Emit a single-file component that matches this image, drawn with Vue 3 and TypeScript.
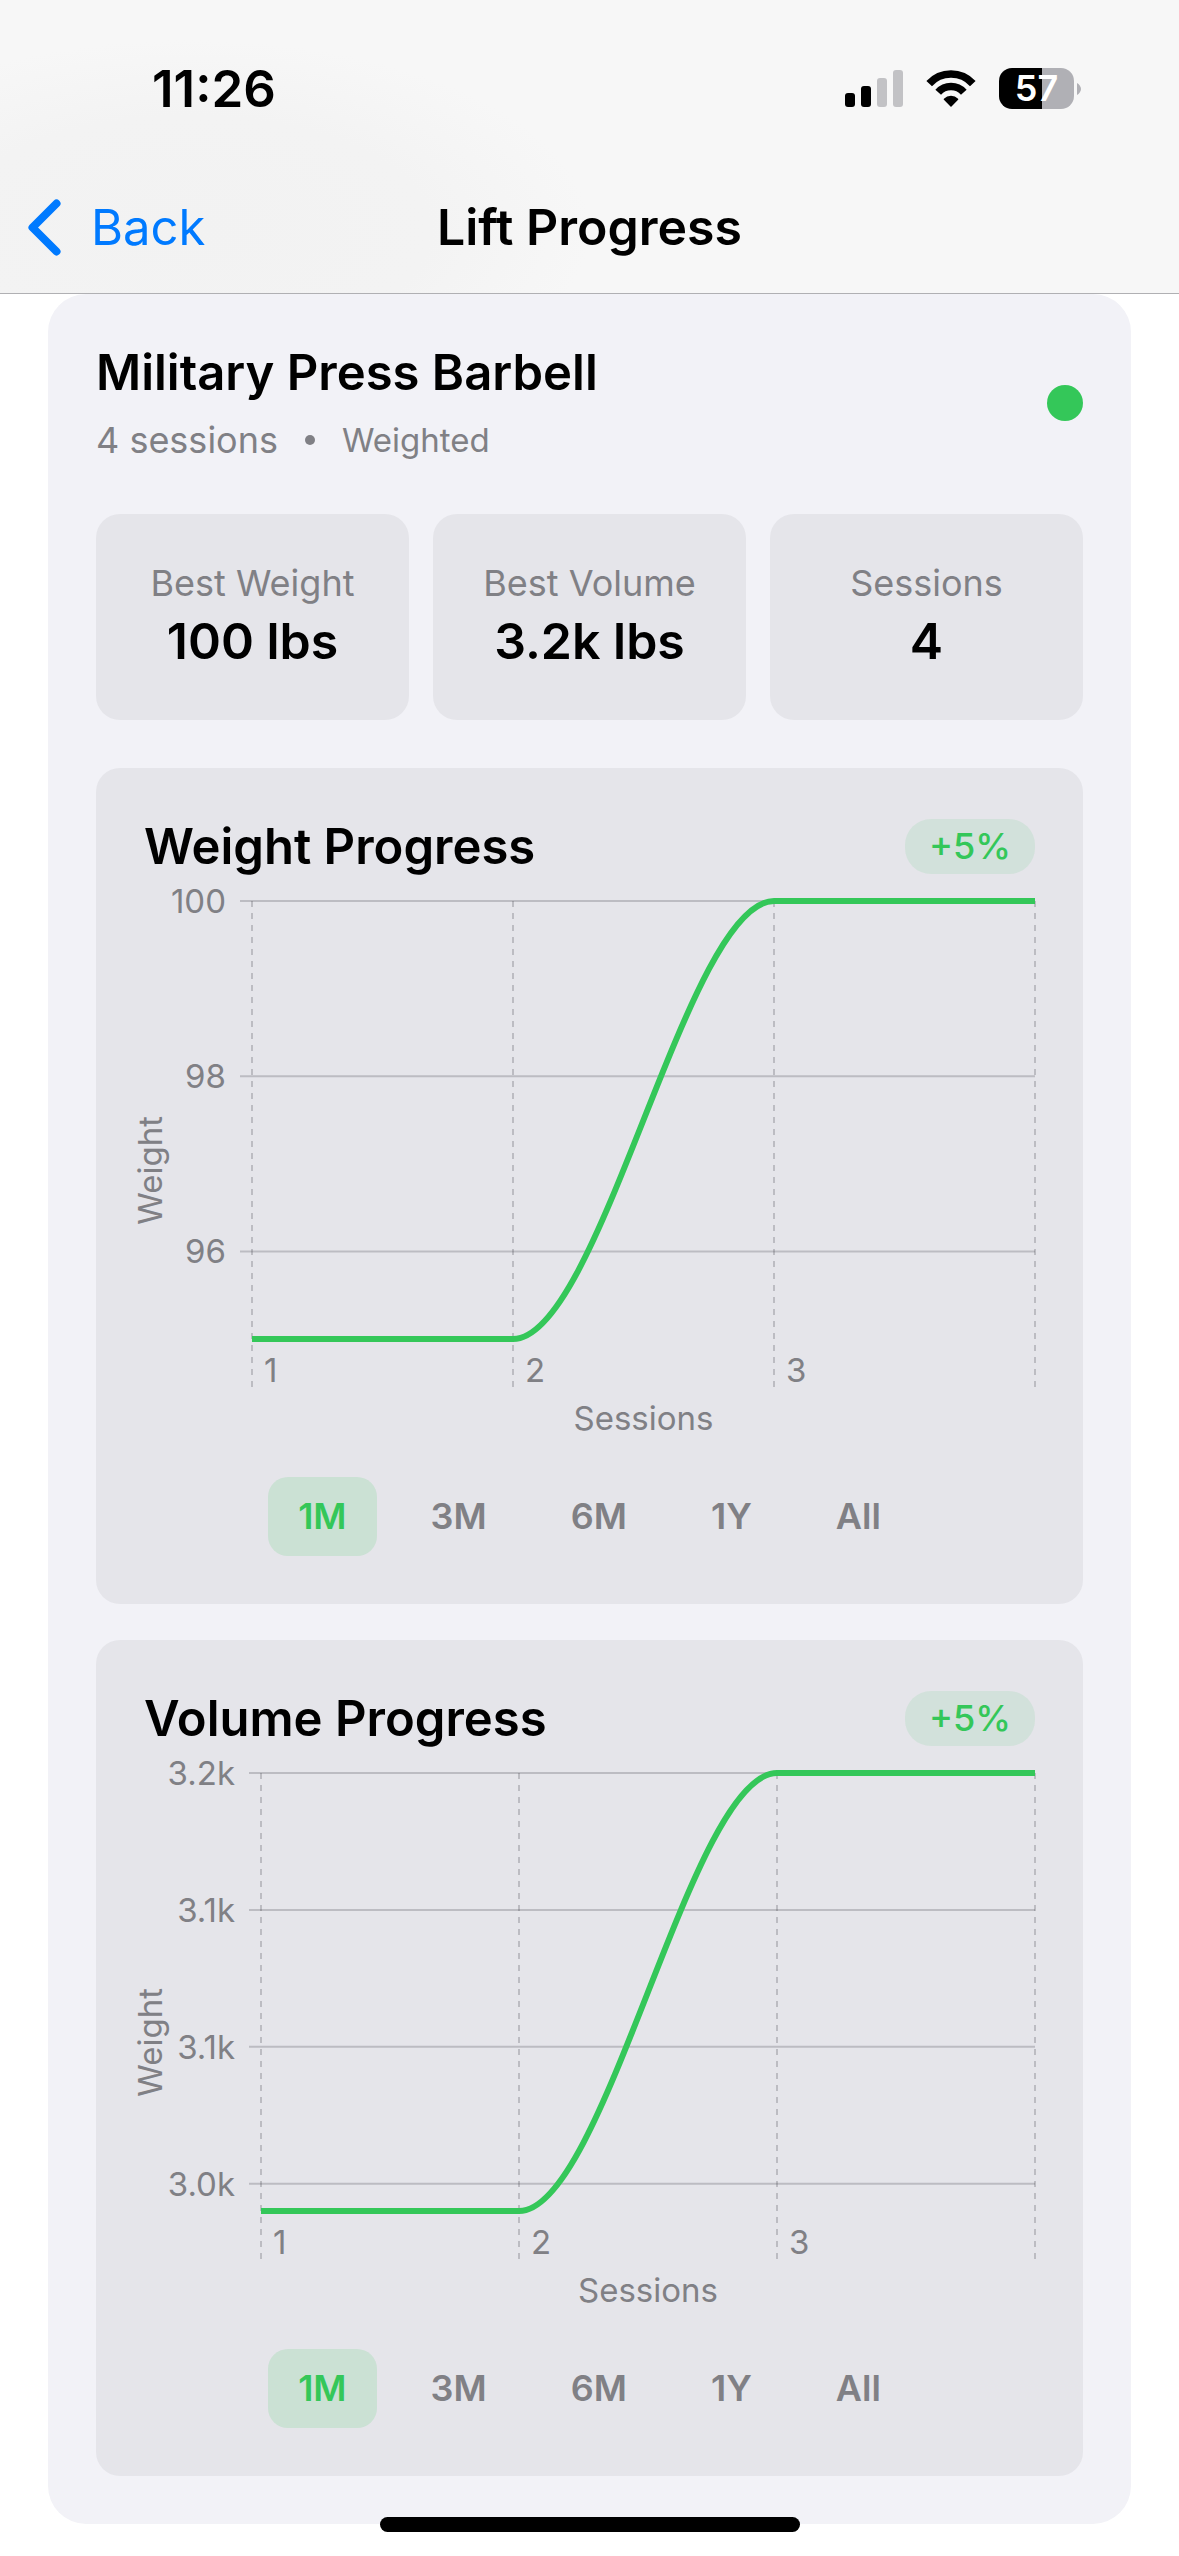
<script setup lang="ts">
import { reactive } from 'vue'

interface Tick {
  label: string
  at: number
}

interface Chart {
  id: string
  title: string
  change: string
  wide: boolean
  ticks: Tick[]
}

interface Stat {
  label: string
  value: string
}

const stats: Stat[] = [
  { label: 'Best Weight', value: '100 lbs' },
  { label: 'Best Volume', value: '3.2k lbs' },
  { label: 'Sessions', value: '4' },
]

// `at` is the distance from the top of the plot, in percent
const charts: Chart[] = [
  {
    id: 'weight',
    title: 'Weight Progress',
    change: '+5%',
    wide: false,
    ticks: [
      { label: '100', at: 0 },
      { label: '98', at: 40 },
      { label: '96', at: 80 },
    ],
  },
  {
    id: 'volume',
    title: 'Volume Progress',
    change: '+5%',
    wide: true,
    ticks: [
      { label: '3.2k', at: 0 },
      { label: '3.1k', at: 31.25 },
      { label: '3.1k', at: 62.5 },
      { label: '3.0k', at: 93.75 },
    ],
  },
]

const ranges: string[] = ['1M', '3M', '6M', '1Y', 'All']
const selected = reactive<Record<string, string>>({ weight: '1M', volume: '1M' })

const columns: { x: string; label: string }[] = [
  { x: '0%', label: '1' },
  { x: '33.333%', label: '2' },
  { x: '66.667%', label: '3' },
  { x: '100%', label: '' },
]
</script>

<template>
  <div class="screen">
    <header class="top">
      <div class="status">
        <span class="time">11:26</span>
        <div class="indicators">
          <svg class="signal" viewBox="0 0 58 37" width="58" height="37" aria-hidden="true">
            <rect x="0" y="23" width="10" height="14" rx="3" />
            <rect x="16" y="16" width="10" height="21" rx="3" />
            <rect class="off" x="32" y="8" width="10" height="29" rx="3" />
            <rect class="off" x="48" y="0" width="10" height="37" rx="3" />
          </svg>
          <svg viewBox="0 0 50 37" width="50" height="37" aria-hidden="true">
            <g fill="none" stroke="#000" stroke-width="7.6">
              <path d="M3.2 13.6A29.6 29.6 0 0 1 46.8 13.6" />
              <path d="M12.2 22.2A17.2 17.2 0 0 1 37.8 22.2" />
            </g>
            <path
              d="M25 36L18.4 29.2A9.4 9.4 0 0 1 31.6 29.2Z"
              stroke="#000"
              stroke-width="1.4"
              stroke-linejoin="round"
            />
          </svg>
          <div class="battery">
            <span class="charge">57</span>
            <svg viewBox="0 0 4 12" width="4" height="12" aria-hidden="true">
              <path d="M0 0C2 1 4 3.500 4 6S2 11 0 12Z" fill="#b0b0b5" />
            </svg>
          </div>
        </div>
      </div>
      <nav class="nav">
        <button class="back" type="button">
          <svg viewBox="0 0 33 57" width="33" height="57" aria-hidden="true">
            <path
              d="M28.500 4.500L4.500 28.500L28.500 52.500"
              fill="none"
              stroke="#007aff"
              stroke-width="8"
              stroke-linecap="round"
              stroke-linejoin="round"
            />
          </svg>
          <span>Back</span>
        </button>
        <h1 class="title">Lift Progress</h1>
      </nav>
    </header>

    <main class="content">
      <section class="lift">
        <div class="lift-head">
          <div class="lift-text">
            <h2 class="heading">Military Press Barbell</h2>
            <p class="meta">
              <span>4 sessions</span>
              <i class="bullet"></i>
              <span class="kind">Weighted</span>
            </p>
          </div>
          <span class="dot"></span>
        </div>

        <dl class="stats">
          <div v-for="s in stats" :key="s.label" class="stat">
            <dt>{{ s.label }}</dt>
            <dd>{{ s.value }}</dd>
          </div>
        </dl>

        <div class="charts">
          <article v-for="c in charts" :key="c.id" class="panel">
            <div class="panel-head">
              <h3 class="heading">{{ c.title }}</h3>
              <span class="pill">{{ c.change }}</span>
            </div>

            <div class="chart">
              <span class="y-title">Weight</span>
              <div class="body" :class="{ wide: c.wide }">
                <svg class="plot" role="img" :aria-label="c.title">
                  <g v-for="(t, i) in c.ticks" :key="i">
                    <line class="grid" x1="-12" x2="100%" :y1="t.at + '%'" :y2="t.at + '%'" />
                    <text class="tick end" x="-26" :y="t.at + '%'" dy="12">{{ t.label }}</text>
                  </g>
                  <g v-for="col in columns" :key="col.x">
                    <line class="grid dashed" :x1="col.x" :x2="col.x" y1="0" y2="486" />
                    <text class="tick" :x="col.x" dx="12" y="481">{{ col.label }}</text>
                  </g>
                  <svg class="curve" viewBox="0 0 3 1" width="100%" height="100%" preserveAspectRatio="none">
                    <path d="M0 1H1C1.3333 1 1.6667 0 2 0H3" />
                  </svg>
                </svg>
                <span class="x-title">Sessions</span>
              </div>
            </div>

            <div class="ranges">
              <button
                v-for="r in ranges"
                :key="r"
                type="button"
                class="range"
                :class="{ active: selected[c.id] === r }"
                :aria-pressed="selected[c.id] === r"
                @click="selected[c.id] = r"
              >
                {{ r }}
              </button>
            </div>
          </article>
        </div>
      </section>
    </main>
    <div class="home"></div>
  </div>
</template>

<style>
body {
  margin: 0;
  background: #fff;
}
</style>

<style scoped>
.screen {
  position: relative;
  min-height: 100vh;
  box-sizing: border-box;
  font-family: Inter, 'Liberation Sans', sans-serif;
  color: #000;
}

h1,
h2,
h3,
p,
dl,
dd {
  margin: 0;
}

button {
  border: 0;
  background: none;
  padding: 0;
  font: inherit;
}

.top {
  background: radial-gradient(ellipse 400px 190px at 190px 230px, #f2f2f2 0%, #f3f3f3 60%, #f7f7f7 100%);
  border-bottom: 1px solid #b0b0b3;
}

.status {
  display: flex;
  justify-content: space-between;
  align-items: center;
  padding: 58px 98px 42px 152px;
}

.time {
  font-size: 51px;
  line-height: 61px;
  font-weight: 600;
}

.indicators {
  display: flex;
  align-items: center;
  gap: 23px;
}

.signal .off {
  fill: #c2c2c5;
}

.battery {
  display: flex;
  align-items: center;
  gap: 3px;
}

.charge {
  width: 75px;
  height: 41px;
  border-radius: 13px;
  background: linear-gradient(to right, #000 57%, #b0b0b5 57%);
  color: #fff;
  font-size: 36px;
  line-height: 41px;
  font-weight: 600;
  text-align: center;
}

.nav {
  display: grid;
  grid-template-columns: 1fr auto 1fr;
  align-items: center;
  height: 132px;
  padding: 0 28px;
}

.back {
  display: flex;
  align-items: center;
  justify-self: start;
  gap: 30px;
  color: #007aff;
  font-size: 49px;
  line-height: 61px;
}

.heading {
  font-size: 49px;
  line-height: 61px;
  font-weight: 600;
}

.title {
  font-size: 50px;
  line-height: 61px;
  font-weight: 600;
}

.content {
  padding: 0 48px 32px;
}

.lift {
  padding: 48px;
  border-radius: 38px;
  background: #f2f2f7;
}

.lift-head {
  display: flex;
  justify-content: space-between;
  align-items: center;
  margin-bottom: 50px;
}

.meta {
  display: flex;
  align-items: center;
  gap: 27px;
  margin-top: 13px;
  font-size: 36px;
  line-height: 48px;
  color: #808085;
}

.kind {
  font-size: 33px;
}

.bullet {
  width: 10px;
  height: 10px;
  border-radius: 50%;
  background: #808085;
}

.dot {
  width: 36px;
  height: 36px;
  border-radius: 50%;
  background: #34c759;
}

.stats {
  display: grid;
  grid-template-columns: repeat(3, 1fr);
  gap: 24px;
  margin-bottom: 48px;
}

.stat {
  display: flex;
  flex-direction: column;
  align-items: center;
  gap: 6px;
  padding: 48px 12px;
  border-radius: 24px;
  background: #e5e5ea;
}

.stat dt {
  font-size: 36px;
  line-height: 43px;
  color: #808085;
}

.stat dd {
  font-size: 50px;
  line-height: 61px;
  font-weight: 600;
}

.charts {
  display: flex;
  flex-direction: column;
  gap: 36px;
}

.panel {
  padding: 48px;
  border-radius: 24px;
  background: #e5e5ea;
}

.panel-head {
  display: flex;
  justify-content: space-between;
  align-items: center;
  margin-bottom: 24px;
}

.pill {
  padding: 6px 24px;
  border-radius: 26px;
  background: rgba(52, 199, 89, 0.1);
  color: #34c759;
  font-size: 36px;
  line-height: 43px;
  font-weight: 500;
}

.chart {
  display: flex;
  align-items: center;
  margin-bottom: 38px;
}

.y-title {
  writing-mode: vertical-rl;
  transform: rotate(180deg);
  font-size: 33px;
  line-height: 12px;
  color: #808085;
}

.body {
  flex: 1;
  display: flex;
  flex-direction: column;
  margin-left: 96px;
}

.body.wide {
  margin-left: 105px;
}

.plot {
  display: block;
  width: 100%;
  height: 438px;
  margin-bottom: 58px;
  overflow: visible;
}

.grid {
  stroke: rgba(60, 60, 67, 0.24);
  stroke-width: 2;
}

.dashed {
  stroke-dasharray: 6 6;
}

.tick {
  font-size: 33px;
  fill: #808085;
}

.end {
  text-anchor: end;
}

.curve {
  overflow: visible;
}

.curve path {
  fill: none;
  stroke: #34c759;
  stroke-width: 6;
  vector-effect: non-scaling-stroke;
}

.x-title {
  align-self: center;
  font-size: 33px;
  line-height: 42px;
  color: #808085;
}

.ranges {
  display: flex;
  justify-content: center;
  gap: 24px;
}

.range {
  padding: 18px 30px;
  border-radius: 20px;
  color: #808085;
  font-size: 36px;
  line-height: 43px;
  font-weight: 600;
}

.range.active {
  background: rgba(52, 199, 89, 0.15);
  color: #34c759;
}

/* floats over the end of the scrolled content */
.home {
  position: absolute;
  bottom: 24px;
  left: 50%;
  width: 420px;
  height: 15px;
  border-radius: 8px;
  background: #000;
  transform: translateX(-50%);
}
</style>
